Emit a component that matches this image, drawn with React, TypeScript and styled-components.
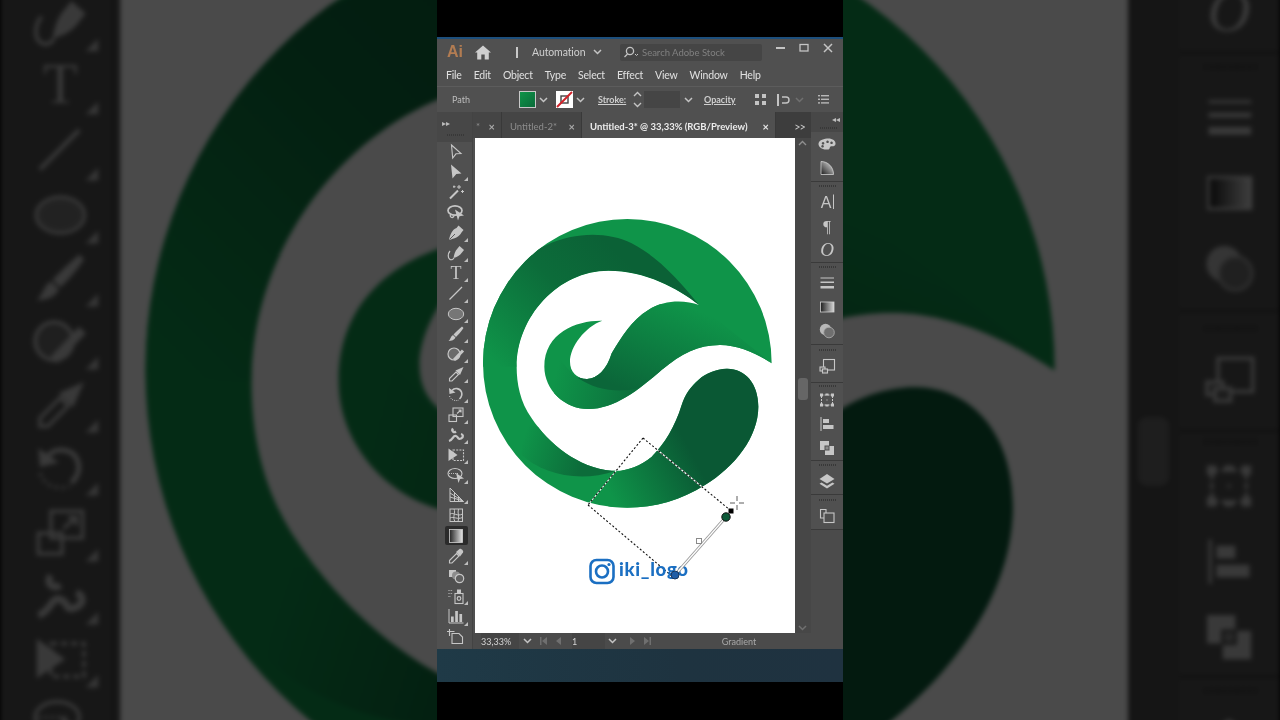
import React from "react"
import styled, { createGlobalStyle } from "styled-components"

const panel = "#505050"
const panelDark = "#3d3d3d"
const iconGrey = "#c6c6c6"

const GlobalStyle = createGlobalStyle`
  html, body { margin: 0; padding: 0; background: #000; }
  #root { width: 1280px; height: 720px; overflow: hidden; }
`

const Stage = styled.div`
  position: relative;
  width: 1280px;
  height: 720px;
  overflow: hidden;
  background: #000;
  display: flex;
  justify-content: center;
  font-family: Lato, "Liberation Sans", sans-serif;
`

// the video's blurred, zoomed copy of the same frame behind the portrait strip
const Backdrop = styled.div`
  position: absolute;
  inset: 0;
  display: flex;
  justify-content: center;
  transform: scale(3.15);
  transform-origin: 640px 360px;
  filter: blur(0.7px) brightness(0.29);
`

const Column = styled.div`
  position: relative;
  width: 406px;
  height: 720px;
  flex: none;
  background: #000;
  display: flex;
  flex-direction: column;
  padding-top: 37px;
  box-sizing: border-box;
  filter: blur(0.35px);
`

const BlueLine = styled.div`
  height: 2px;
  background: #1d4f7c;
`

const Window = styled.div`
  display: flex;
  flex-direction: column;
  height: 610px;
  background: ${panel};
  color: #d8d8d8;
`

const TealBar = styled.div`
  height: 33px;
  background: linear-gradient(90deg, #1f3a47, #1e3340 60%, #1f3240);
`

const TitleBar = styled.div`
  height: 26px;
  display: flex;
  align-items: center;
  padding-left: 10px;
`

const Cell = styled.div<{ $w: number; $left?: number; $center?: boolean }>`
  width: ${p => p.$w}px;
  margin-left: ${p => p.$left ?? 0}px;
  flex: none;
  display: flex;
  align-items: center;
  justify-content: ${p => (p.$center ? "center" : "flex-start")};
  white-space: nowrap;
`

const AiMark = styled.span`
  font-family: "Liberation Sans", sans-serif;
  font-size: 16px;
  font-weight: 700;
  color: #b27c52;
`

const Divider = styled.span`
  width: 2px;
  height: 11px;
  background: #c9c9c9;
`

const WorkspaceLabel = styled.span`
  font-size: 10.5px;
  letter-spacing: -0.1px;
  color: #cfcfcf;
`

const SearchBox = styled.div`
  width: 142px;
  height: 17px;
  margin-left: 16px;
  flex: none;
  background: #454545;
  border-radius: 2px;
  display: flex;
  align-items: center;
  gap: 2px;
  padding-left: 3px;
  box-sizing: border-box;
  font-size: 9.5px;
  color: #808080;
`

const WinControls = styled.div`
  display: flex;
  margin-left: 7px;
  align-self: flex-start;
  height: 17px;
`

const WinButton = styled.div`
  width: 23.5px;
  display: flex;
  align-items: center;
  justify-content: center;
  color: #c4c4c4;
`

const MenuBar = styled.div`
  height: 19px;
  display: flex;
  align-items: center;
  gap: 12px;
  padding-left: 9px;
  font-size: 10.5px;
  letter-spacing: -0.2px;
  color: #e0e0e0;
`

const ControlBar = styled.div`
  height: 26px;
  margin-top: 2px;
  display: flex;
  align-items: center;
  padding-left: 15px;
  border-top: 1px solid #5c5c5c;
  box-sizing: border-box;
  font-size: 9px;
  color: #bdbdbd;
`

const Underlined = styled.span`
  font-weight: 700;
  text-decoration: underline;
  color: #cfcfcf;
`

const FillSwatch = styled.div`
  width: 17px;
  height: 17px;
  box-sizing: border-box;
  border: 1px solid #c8c8c8;
  background: linear-gradient(135deg, #0f9449, #0a6b3a);
`

const StrokeSwatch = styled.div`
  width: 17px;
  height: 17px;
  background: #fff;
  display: flex;
`

const NumberField = styled.div`
  width: 36px;
  height: 17px;
  background: #454545;
`

const ChromeSpacer = styled.div<{ $h: number }>`
  height: ${p => p.$h}px;
  flex: none;
`

const Body = styled.div`
  flex: 1;
  min-height: 0;
  display: flex;
`

const ToolDock = styled.div`
  width: 36px;
  flex: none;
  display: flex;
  flex-direction: column;
  border-right: 1px solid #434343;
  box-sizing: border-box;
`

const DockHead = styled.div<{ $h: number; $end?: boolean }>`
  height: ${p => p.$h}px;
  flex: none;
  display: flex;
  flex-direction: column;
  justify-content: flex-end;
  align-items: ${p => (p.$end ? "flex-end" : "flex-start")};
  background: #474747;
  font-size: 8px;
  line-height: 10px;
  color: #bcbcbc;
  padding: 0 3px 0 5px;
  box-sizing: border-box;
`

const Grip = styled.div<{ $h?: number }>`
  height: ${p => p.$h ?? 8}px;
  flex: none;
  align-self: stretch;
  display: flex;
  align-items: center;
  justify-content: center;
  &::before {
    content: "";
    width: 17px;
    height: 2px;
    background: repeating-linear-gradient(90deg, #383838 0 1px, transparent 1px 2px);
  }
`

const ToolButton = styled.div<{ $active?: boolean; $more?: boolean }>`
  position: relative;
  height: 20.2px;
  margin-left: 2px;
  width: 34px;
  flex: none;
  display: flex;
  align-items: center;
  justify-content: center;
  color: ${iconGrey};
  &::before {
    content: "";
    display: ${p => (p.$active ? "block" : "none")};
    position: absolute;
    left: 6px;
    top: 0;
    width: 23px;
    height: 19px;
    background: #2b2b2b;
    border-radius: 2px;
  }
  &::after {
    content: "";
    display: ${p => (p.$more ? "block" : "none")};
    position: absolute;
    right: 5px;
    bottom: 1px;
    border-left: 4px solid transparent;
    border-bottom: 4px solid #bdbdbd;
  }
  svg { position: relative; }
`

const Center = styled.div`
  flex: 1;
  min-width: 0;
  display: flex;
  flex-direction: column;
`

const TabRow = styled.div`
  height: 26px;
  flex: none;
  display: flex;
  background: ${panelDark};
  font-size: 9.5px;
`

const Tab = styled.div<{ $w: number; $pad?: number; $active?: boolean }>`
  width: ${p => p.$w}px;
  flex: none;
  display: flex;
  align-items: center;
  justify-content: space-between;
  padding: 2px 6px 0 ${p => p.$pad ?? 8}px;
  box-sizing: border-box;
  background: ${p => (p.$active ? panel : "#454545")};
  color: ${p => (p.$active ? "#ececec" : "#8d8d8d")};
  font-weight: ${p => (p.$active ? 700 : 400)};
  border-right: 1px solid #393939;
`

const TabClose = styled.span<{ $active?: boolean }>`
  font-size: 11px;
  font-weight: 700;
  color: ${p => (p.$active ? "#e8e8e8" : "#a8a8a8")};
`

const TabOverflow = styled.div`
  flex: 1;
  display: flex;
  align-items: center;
  justify-content: flex-end;
  padding: 2px 6px 0 0;
  font-size: 11px;
  letter-spacing: -1px;
  color: #c8c8c8;
`

const CanvasRow = styled.div`
  height: 495px;
  flex: none;
  display: flex;
  padding-left: 2px;
`

const Canvas = styled.div`
  width: 320px;
  flex: none;
  background: #fff;
  svg { display: block; }
`

const ScrollTrack = styled.div`
  width: 16px;
  flex: none;
  display: flex;
  flex-direction: column;
  align-items: center;
  padding: 2px 4px 2px 3px;
  box-sizing: border-box;
  background: #474747;
  color: #8f8f8f;
`

const ScrollThumb = styled.div`
  width: 10px;
  height: 22px;
  margin-top: 232px;
  margin-bottom: auto;
  border-radius: 3px;
  background: #666;
`

const StatusBar = styled.div`
  height: 16px;
  flex: none;
  display: flex;
  align-items: center;
  font-size: 9px;
  color: #d4d4d4;
  padding-left: 8px;
  background: #4b4b4b;
`

const StatusField = styled(Cell)`
  height: 16px;
  background: #454545;
`

const GradientLabel = styled.span`
  color: #a9a9a9;
`

const RightDock = styled.div`
  width: 32px;
  flex: none;
  display: flex;
  flex-direction: column;
  background: #4b4b4b;
`

const DockGroup = styled.div<{ $h: number }>`
  height: ${p => p.$h}px;
  flex: none;
  box-sizing: border-box;
  display: flex;
  flex-direction: column;
  border-bottom: 1px solid #3a3a3a;
  background: ${panel};
`

const DockIcon = styled.div`
  height: 24px;
  flex: none;
  display: flex;
  align-items: center;
  justify-content: center;
  color: ${iconGrey};
`

const Chevron = ({ dim }: { dim?: boolean }) => (
  <svg width="9" height="6" viewBox="0 0 9 6" fill="none" stroke={dim ? "#707070" : "#c4c4c4"} strokeWidth="1.5">
    <path d="M1 1 L4.5 4.5 L8 1" />
  </svg>
)

const GlyphText = ({ children, size = 15, italic, serif, x = 10 }: { children: string; size?: number; italic?: boolean; serif?: boolean; x?: number }) => (
  <text
    x={x}
    y="15.5"
    textAnchor="middle"
    fontSize={size}
    fontStyle={italic ? "italic" : "normal"}
    fontFamily={serif ? '"Liberation Serif", serif' : '"Liberation Sans", sans-serif'}
    fill="currentColor"
  >
    {children}
  </text>
)

const S = { fill: "none", stroke: "currentColor" }

const toolIcons: Record<string, React.ReactNode> = {
  select: <path {...S} strokeWidth="1.1" d="M5.5 3 L15 11.5 L10 11.8 L6.7 16 Z" />,
  direct: <path fill="currentColor" d="M5 2.5 L15.5 11.5 L10.3 12 L6.5 16.5 Z" />,
  wand: (
    <g>
      <path {...S} strokeWidth="2" d="M4 16.5 L12 8.5" />
      <path {...S} strokeWidth="1" d="M13 3 V7 M11 5 H15 M16.5 8 V11 M15 9.5 H18 M8 3.5 V6 M7 4.7 H9.5" />
    </g>
  ),
  lasso: (
    <g>
      <ellipse {...S} strokeWidth="1.7" cx="9" cy="7.5" rx="7" ry="4.7" />
      <path {...S} strokeWidth="1.3" d="M5 11 C2.5 14 7 16 8 13" />
      <path fill="currentColor" d="M9 6.5 L18 12.5 L13.5 13.2 L12 17.5 Z" />
    </g>
  ),
  pen: (
    <g>
      <path fill="currentColor" d="M12.5 2.5 L17.5 7 L15.5 9.5 C13.5 14 8 15.5 3 17 C4 12 6 6.5 10.5 5 Z" />
      <path {...S} stroke="#505050" strokeWidth="0.9" d="M3.5 16.5 L9 11" />
    </g>
  ),
  curvature: (
    <g>
      <path fill="currentColor" d="M13.5 3 L18 7 L16 9.5 C14 12.5 11 14 7.5 15 C8 12 9 8 11.5 5.5 Z" />
      <path {...S} strokeWidth="1.2" d="M4 8 C1.5 11 2 15 3.5 16 C5 17.5 7 16.5 8 15" />
    </g>
  ),
  type: <GlyphText size={18} serif>T</GlyphText>,
  line: <path {...S} strokeWidth="1.3" d="M3.5 16.5 L16 4" />,
  ellipse: <ellipse fill="#767676" stroke="currentColor" strokeWidth="1" cx="10" cy="10" rx="7.7" ry="5.7" />,
  brush: (
    <path
      fill="currentColor"
      d="M16 2.5 L17.5 4 C15 8 12 11 10 13 L7.5 10.5 C10 8 13 5 16 2.5 Z M7 11 L9.5 13.5 C8.5 16 5.5 17 2.5 17 C4.5 15.5 4.5 12.5 7 11 Z"
    />
  ),
  shaper: (
    <g>
      <circle {...S} strokeWidth="1.2" cx="8" cy="10" r="6" fill="#6a6a6a" />
      <path {...S} strokeWidth="3" d="M8 16 L17 6.5" />
    </g>
  ),
  pencil: (
    <g>
      <path {...S} strokeWidth="1.1" d="M3.5 14.5 L10 8 L12.5 10.5 L6 17 L3.5 17 Z" />
      <path fill="currentColor" d="M9.5 6.5 L17.5 3 L14 11 Z" />
    </g>
  ),
  rotate: (
    <g>
      <path {...S} strokeWidth="1.6" d="M6 6.5 C8.5 3.5 14 4 15.5 8 C16.5 11 15 13.5 13.5 15" />
      <path fill="currentColor" d="M3 4 L3.5 10 L9.5 8.5 Z" />
      <path {...S} strokeWidth="1" strokeDasharray="1 1.2" d="M3.5 12 C5 16 9 17.5 13 16" />
    </g>
  ),
  scale: (
    <g {...S} strokeWidth="1.1">
      <rect x="7" y="3" width="10" height="8.5" />
      <rect x="3" y="10" width="7.5" height="6.5" />
      <path d="M11 8.5 L15 5 M12.5 5 H15 V7.5" />
    </g>
  ),
  warp: (
    <g {...S} strokeWidth="2.3">
      <path d="M3 16 C7 15 7 10 10 11 C13 12 11 15 15 13.5 C18 12 17 9.5 15 9" />
      <path d="M7 3.5 C5 6 8 8 10 6.5" />
    </g>
  ),
  freeTransform: (
    <g>
      <path fill="currentColor" d="M2.5 3.5 L11.5 10 L2.5 16 Z" />
      <rect {...S} strokeWidth="1.1" strokeDasharray="2 1.2" x="7" y="5" width="10.5" height="10.5" />
    </g>
  ),
  shapeBuilder: (
    <g>
      <ellipse {...S} strokeWidth="1.1" cx="9" cy="8.5" rx="7" ry="5" />
      <path {...S} strokeWidth="0.9" strokeDasharray="1 1" d="M3 8.5 H12" />
      <path fill="currentColor" d="M10 8 L18 13.5 L14 14 L12.5 18 Z" />
    </g>
  ),
  perspective: (
    <g {...S} strokeWidth="1">
      <path d="M4 3 V16.5 H17.5 Z" />
      <path d="M4 8 L17.5 16.5 M4 12 L17 16 M8.5 7.5 V16.5 M12.5 11.5 V16.5" />
    </g>
  ),
  mesh: (
    <g {...S} strokeWidth="1">
      <rect x="4" y="4" width="12.5" height="12.5" />
      <path d="M4 9 C8 7 11 12 16.5 9 M4 13 C8 11 11 15 16.5 12.5 M8 4 C10 8 6 12 9 16.5 M12.5 4 C11 8 14 12 12 16.5" />
    </g>
  ),
  gradient: (
    <g>
      <defs>
        <linearGradient id="toolGrad">
          <stop offset="0" stopColor="#222" />
          <stop offset="1" stopColor="#e4e4e4" />
        </linearGradient>
      </defs>
      <rect x="3.5" y="3.5" width="13" height="13" fill="url(#toolGrad)" stroke="#d0d0d0" strokeWidth="0.8" />
    </g>
  ),
  dropper: (
    <g>
      <path {...S} strokeWidth="1.1" d="M3.5 14.5 L10.5 7.5 L13 10 L6 17 L3.5 17 Z" />
      <path fill="currentColor" d="M10 6 L13.5 3 C15 2 18 5 17 6.5 L14 10.5 Z" />
    </g>
  ),
  blend: (
    <g>
      <rect fill="currentColor" x="3" y="4" width="7" height="7" />
      <circle fill="#8c8c8c" cx="10" cy="9.5" r="4" />
      <circle {...S} fill="#606060" strokeWidth="1.2" cx="13.5" cy="12.5" r="4.2" />
    </g>
  ),
  sprayer: (
    <g>
      <rect {...S} strokeWidth="1.1" x="9" y="7.5" width="8" height="10" />
      <rect fill="currentColor" x="11" y="3.5" width="4" height="3.5" />
      <circle {...S} strokeWidth="1.2" cx="13" cy="12.5" r="1.8" />
      <path {...S} strokeWidth="1" strokeDasharray="1 1.2" d="M2.5 4.5 H7 M2.5 7.5 H7 M2.5 10.5 H5" />
    </g>
  ),
  graph: (
    <g>
      <path {...S} strokeWidth="1" d="M3 3 V17 H17.5" />
      <rect fill="currentColor" x="5" y="10.5" width="2.7" height="5.5" />
      <rect fill="currentColor" x="9.2" y="5" width="2.7" height="11" />
      <rect fill="currentColor" x="13.4" y="8" width="2.7" height="8" />
    </g>
  ),
  artboard: (
    <g {...S} strokeWidth="1.1">
      <path d="M6 6.5 H13 L16.5 10 V16.5 H6 Z" />
      <path d="M3.5 2 V9 M1 4.5 H8.5" />
    </g>
  ),
}

const tools: { name: string; more?: boolean; active?: boolean }[] = [
  { name: "select" },
  { name: "direct", more: true },
  { name: "wand" },
  { name: "lasso" },
  { name: "pen", more: true },
  { name: "curvature", more: true },
  { name: "type", more: true },
  { name: "line", more: true },
  { name: "ellipse", more: true },
  { name: "brush", more: true },
  { name: "shaper", more: true },
  { name: "pencil", more: true },
  { name: "rotate", more: true },
  { name: "scale", more: true },
  { name: "warp", more: true },
  { name: "freeTransform", more: true },
  { name: "shapeBuilder", more: true },
  { name: "perspective", more: true },
  { name: "mesh" },
  { name: "gradient", active: true },
  { name: "dropper", more: true },
  { name: "blend" },
  { name: "sprayer", more: true },
  { name: "graph", more: true },
  { name: "artboard" },
]

const dockIcons: Record<string, React.ReactNode> = {
  palette: (
    <path
      fill="currentColor"
      fillRule="evenodd"
      d="M10 4.5 C15 4 19 6.5 18.5 10 C18 13 15 12 13.5 12.5 C12 13.5 13.5 15.5 10.5 15.5 C5 16 1.5 13 1.5 10 C1.5 7 5 5 10 4.5 Z M6 8 a1.3 1.3 0 1 0 .1 0 Z M10.5 6.5 a1.3 1.3 0 1 0 .1 0 Z M14.5 7.5 a1.3 1.3 0 1 0 .1 0 Z M5.5 11 a1.3 1.3 0 1 0 .1 0 Z"
    />
  ),
  swatch: (
    <g>
      <defs>
        <linearGradient id="dockSwatch" x1="0" y1="1" x2="1" y2="0">
          <stop offset="0" stopColor="#1c1c1c" />
          <stop offset="1" stopColor="#e8e8e8" />
        </linearGradient>
      </defs>
      <path fill="url(#dockSwatch)" stroke="#d0d0d0" strokeWidth="0.8" d="M4 3.5 C11 3.5 16.5 9 16.5 16.5 H4 Z" />
    </g>
  ),
  charA: (
    <g>
      <GlyphText size={16} x={9}>A</GlyphText>
      <path d="M16.5 2.5 V17" stroke="currentColor" strokeWidth="1" />
    </g>
  ),
  para: (
    <g>
      <GlyphText size={17} serif>¶</GlyphText>
    </g>
  ),
  opentype: <GlyphText size={19} italic serif>O</GlyphText>,
  stroke: <path fill="currentColor" d="M3.5 4.5 H17 V5.5 H3.5 Z M3.5 8.5 H17 V10 H3.5 Z M3.5 13 H17 V15.5 H3.5 Z" />,
  gradient: (
    <g>
      <defs>
        <linearGradient id="dockGrad">
          <stop offset="0" stopColor="#1c1c1c" />
          <stop offset="1" stopColor="#d8d8d8" />
        </linearGradient>
      </defs>
      <rect x="3.5" y="5" width="13.5" height="10" fill="url(#dockGrad)" stroke="#d0d0d0" strokeWidth="0.8" />
    </g>
  ),
  transparency: (
    <g>
      <circle fill="#b8b8b8" cx="8.5" cy="8.5" r="5.7" />
      <circle fill="#6f6f6f" stroke="#a8a8a8" strokeWidth="0.9" cx="12" cy="11.5" r="5.3" />
    </g>
  ),
  appearance: (
    <g {...S} strokeWidth="1.1">
      <rect x="6.5" y="3.5" width="11" height="10.5" />
      <rect x="3" y="11" width="5" height="4" fill="#606060" />
      <rect x="5.5" y="13" width="5" height="4" fill="#606060" />
    </g>
  ),
  transform: (
    <g>
      <rect {...S} strokeWidth="1" strokeDasharray="2 1" x="4.5" y="5" width="11" height="10" />
      <path
        fill="currentColor"
        d="M3 3.5 H6 V6.5 H3 Z M14 3.5 H17 V6.5 H14 Z M3 13.5 H6 V16.5 H3 Z M14 13.5 H17 V16.5 H14 Z M8.5 3.5 H11.5 V5.5 H8.5 Z M8.5 14.5 H11.5 V16.5 H8.5 Z M9.5 9.5 H10.5 V10.5 H9.5 Z"
      />
    </g>
  ),
  align: <path fill="currentColor" d="M3.5 3 H4.5 V17 H3.5 Z M6 5 H12 V9 H6 Z M6 11 H16.5 V15 H6 Z" />,
  pathfinder: (
    <g>
      <rect fill="currentColor" x="3" y="3" width="9" height="9" />
      <rect fill="currentColor" x="8" y="8" width="9" height="9" />
      <rect fill="#8a8a8a" stroke="#505050" x="8" y="8" width="4" height="4" />
    </g>
  ),
  layers: (
    <g fill="currentColor">
      <path d="M10 3 L17.5 8 L10 12.5 L2.5 8 Z" />
      <path d="M4.5 11.5 L10 14.8 L15.5 11.5 L17.5 12.8 L10 17.5 L2.5 12.8 Z" />
    </g>
  ),
  artboards: (
    <g {...S} strokeWidth="1.1">
      <path d="M9 7 V3.5 H3.5 V12 H7" />
      <rect x="7" y="7" width="10" height="9.5" />
    </g>
  ),
}

const dockGroups: { h: number; grip?: number; rows: string[]; first?: boolean }[] = [
  { h: 50, rows: ["palette", "swatch"], first: true },
  { h: 81, rows: ["charA", "para", "opentype"] },
  { h: 82, rows: ["stroke", "gradient", "transparency"] },
  { h: 38, grip: 9, rows: ["appearance"] },
  { h: 78, grip: 5, rows: ["transform", "align", "pathfinder"] },
  { h: 34, grip: 8, rows: ["layers"] },
  { h: 35, grip: 9, rows: ["artboards"] },
]

// gradient artwork, in a 930 unit box that sits at 475,210 on the screen at 1/3 scale
const logoPath =
  "M890 460 A433 433 0 1 0 457 893 C540 893 620 870 690 825 C780 770 850 680 850 590 C850 520 810 475 755 476 C690 478 640 525 620 585 C600 650 570 700 530 740 C495 770 450 785 410 782 C310 775 220 700 170 625 C135 575 125 520 125 470 C125 320 250 182 400 182 C510 182 610 235 672 285 C630 270 570 268 520 300 C470 330 440 380 410 430 C395 480 365 508 335 507 C305 506 285 485 285 455 C285 410 330 350 382 332 C310 330 208 365 208 470 C208 540 270 597 340 597 C420 597 490 540 560 480 C620 430 670 405 735 405 C790 405 845 430 890 460 Z"

const Artwork = ({ annotated }: { annotated: boolean }) => (
  <svg width="320" height="495" viewBox="475 138 320 495">
    <defs>
      <clipPath id="logoClip">
        <path d={logoPath} />
      </clipPath>
      <linearGradient id="topShade" gradientUnits="userSpaceOnUse" x1="420" y1="120" x2="70" y2="470">
        <stop offset="0" stopColor="#0b6136" />
        <stop offset="0.4" stopColor="#0c6c3a" />
        <stop offset="1" stopColor="#0f9449" />
      </linearGradient>
      <linearGradient id="lowShade" gradientUnits="userSpaceOnUse" x1="140" y1="700" x2="320" y2="760">
        <stop offset="0" stopColor="#0f9449" />
        <stop offset="1" stopColor="#0c6c3a" />
      </linearGradient>
      <linearGradient id="blobShade" gradientUnits="userSpaceOnUse" x1="410" y1="860" x2="650" y2="730">
        <stop offset="0" stopColor="#0f9449" />
        <stop offset="1" stopColor="#0a5834" />
      </linearGradient>
      <linearGradient id="leafShade" gradientUnits="userSpaceOnUse" x1="620" y1="280" x2="500" y2="560">
        <stop offset="0" stopColor="#0f9449" />
        <stop offset="1" stopColor="#0b6639" />
      </linearGradient>
      <linearGradient id="lobeShade" gradientUnits="userSpaceOnUse" x1="240" y1="500" x2="480" y2="560">
        <stop offset="0" stopColor="#0f9449" />
        <stop offset="1" stopColor="#0c6f3c" />
      </linearGradient>
    </defs>
    <g transform="translate(475 210) scale(0.33333)">
      <path d={logoPath} fill="#0f9449" />
      <g clipPath="url(#logoClip)">
        <path fill="url(#topShade)" d="M215 105 C300 65 400 65 470 100 C550 140 620 220 672 285 C610 235 510 182 400 182 C250 182 125 320 125 470 L0 470 L0 200 Z" />
        <path fill="url(#lowShade)" d="M140 735 C200 790 310 820 420 783 L420 700 L140 640 Z" />
        <path fill="url(#lobeShade)" d="M230 420 L300 500 L560 480 L480 620 L240 620 Z" />
        <path fill="url(#leafShade)" d="M672 285 L500 280 L400 430 L310 505 C360 540 430 550 490 535 L560 480 L735 405 L890 460 Z" />
        <path fill="url(#blobShade)" d="M400 800 L530 740 L620 560 L720 460 L890 460 L890 900 L400 900 Z" />
      </g>
    </g>

    {annotated && (
      <g>
        <g fill="none" strokeWidth="1.1">
          <path stroke="#fff" d="M643 438 L730 510 M643 438 L588 505 M588 505 L673 577" />
          <path stroke="#111" strokeDasharray="2 2" d="M643 438 L730 510 M643 438 L588 505 M588 505 L673 577" />
        </g>

        <g fill="none" stroke="#1b6fc2">
          <rect x="590.5" y="560" width="23" height="23" rx="6" strokeWidth="2.6" />
          <circle cx="602" cy="571.5" r="6" strokeWidth="2.6" />
        </g>
        <circle cx="609" cy="564.5" r="1.6" fill="#1b6fc2" />
        <text x="619" y="576" fontFamily="Lato, sans-serif" fontWeight="900" fontSize="18.5" fill="#1b6fc2" letterSpacing="0.7">
          iki_logo
        </text>

        <path d="M675 575 L726 517" stroke="#9a9a9a" strokeWidth="3" />
        <path d="M675 575 L726 517" stroke="#fff" strokeWidth="1.2" />
        <rect x="696.5" y="538.5" width="5" height="5" fill="#fff" stroke="#8a8a8a" />
        <rect x="728.5" y="508.5" width="5" height="5" fill="#000" />
        <circle cx="726" cy="517" r="4.2" fill="#0d5a38" stroke="#111" strokeWidth="1" />
        <path d="M737 496 V501 M737 505 V510 M730 503 H735 M739 503 H744" stroke="#333" strokeWidth="0.8" />
        <circle cx="675" cy="575" r="4" fill="#1f5da6" stroke="#16365e" strokeWidth="1" />
      </g>
    )}
  </svg>
)

const TopChrome = () => (
  <>
    <TitleBar>
      <Cell $w={26}><AiMark>Ai</AiMark></Cell>
      <Cell $w={20} $center>
        <svg width="16" height="15" viewBox="0 0 16 15" fill="#cfcfcf">
          <path d="M8 0.5 L16 7.5 H13.8 V14.5 H9.7 V9.5 H6.3 V14.5 H2.2 V7.5 H0 Z" />
        </svg>
      </Cell>
      <Cell $w={20} $left={14} $center><Divider /></Cell>
      <Cell $w={58} $left={5}><WorkspaceLabel>Automation</WorkspaceLabel></Cell>
      <Cell $w={14} $center><Chevron /></Cell>
      <SearchBox>
        <svg width="17" height="12" viewBox="0 0 17 12" fill="none" stroke="#c4c4c4" strokeWidth="1.3">
          <circle cx="7" cy="5" r="3.6" />
          <path d="M4.5 8 L1.5 11" />
          <path d="M12 8 L13.5 9.5 L15 8" strokeWidth="1" />
        </svg>
        Search Adobe Stock
      </SearchBox>
      <WinControls>
        <WinButton>
          <svg width="9" height="3"><rect width="9" height="2" y="1" fill="currentColor" /></svg>
        </WinButton>
        <WinButton>
          <svg width="10" height="9" fill="none" stroke="currentColor" strokeWidth="1.3"><rect x="1" y="1.5" width="8" height="6.5" /></svg>
        </WinButton>
        <WinButton>
          <svg width="10" height="10" stroke="currentColor" strokeWidth="1.5"><path d="M1 1 L9 9 M9 1 L1 9" /></svg>
        </WinButton>
      </WinControls>
    </TitleBar>
    <MenuBar>
      {["File", "Edit", "Object", "Type", "Select", "Effect", "View", "Window", "Help"].map(item => (
        <span key={item}>{item}</span>
      ))}
    </MenuBar>
    <ControlBar>
      <Cell $w={67}>Path</Cell>
      <FillSwatch />
      <Cell $w={14} $center><Chevron /></Cell>
      <Cell $w={17} $left={6}>
        <StrokeSwatch>
          <svg width="17" height="17" fill="none">
            <rect x="5" y="5" width="7" height="7" stroke="#444" strokeWidth="1.4" />
            <path d="M1 16 L16 1" stroke="#d2232a" strokeWidth="2" />
          </svg>
        </StrokeSwatch>
      </Cell>
      <Cell $w={14} $center><Chevron /></Cell>
      <Cell $w={32} $left={11}><Underlined>Stroke:</Underlined></Cell>
      <Cell $w={14} $center>
        <svg width="9" height="17" viewBox="0 0 9 17" fill="none" stroke="#c4c4c4" strokeWidth="1.4">
          <path d="M1 5 L4.5 1.5 L8 5 M1 12 L4.5 15.5 L8 12" />
        </svg>
      </Cell>
      <NumberField />
      <Cell $w={16} $center><Chevron /></Cell>
      <Cell $w={40} $left={8}><Underlined>Opacity</Underlined></Cell>
      <Cell $w={16} $left={8} $center>
        <svg width="11" height="11" fill="#c4c4c4">
          <rect width="4" height="4" /><rect x="7" width="4" height="4" /><rect y="7" width="4" height="4" /><rect x="7" y="7" width="4" height="4" />
        </svg>
      </Cell>
      <Cell $w={16} $left={7} $center>
        <svg width="13" height="12" fill="none" stroke="#c4c4c4" strokeWidth="1.4">
          <path d="M1 0 V12" strokeWidth="2" />
          <path d="M5 3 H9 A3 3 0 0 1 9 9 H5" />
        </svg>
      </Cell>
      <Cell $w={14} $left={1} $center><Chevron dim /></Cell>
      <Cell $w={16} $left={9} $center>
        <svg width="11" height="9" fill="#b8b8b8">
          <rect width="2" height="1.4" /><rect x="3" width="8" height="1.4" />
          <rect y="3.6" width="2" height="1.4" /><rect x="3" y="3.6" width="8" height="1.4" />
          <rect y="7.2" width="2" height="1.4" /><rect x="3" y="7.2" width="8" height="1.4" />
        </svg>
      </Cell>
    </ControlBar>
  </>
)

const Tabs = () => (
  <TabRow>
    <Tab $w={29} $pad={3}>
      <span>*</span>
      <TabClose>×</TabClose>
    </Tab>
    <Tab $w={80}>
      <span>Untitled-2*</span>
      <TabClose>×</TabClose>
    </Tab>
    <Tab $w={194} $active>
      <span>Untitled-3* @ 33,33% (RGB/Preview)</span>
      <TabClose $active>×</TabClose>
    </Tab>
    <TabOverflow>&gt;&gt;</TabOverflow>
  </TabRow>
)

const Status = () => (
  <StatusBar>
    <StatusField $w={38}>33,33%</StatusField>
    <Cell $w={14} $left={1} $center><Chevron /></Cell>
    <Cell $w={36} $left={2} $center>
      <svg width="30" height="8" fill="#6f6f6f">
        <rect x="1" width="1.5" height="8" /><path d="M8 0 V8 L3 4 Z M22 0 V8 L17 4 Z" />
      </svg>
    </Cell>
    <StatusField $w={33}>1</StatusField>
    <Cell $w={14} $center><Chevron /></Cell>
    <Cell $w={36} $center>
      <svg width="30" height="8" fill="#6f6f6f">
        <path d="M8 0 V8 L13 4 Z M22 0 V8 L27 4 Z" /><rect x="27.5" width="1.5" height="8" />
      </svg>
    </Cell>
    <Cell $w={140} $left={14} $center><GradientLabel>Gradient</GradientLabel></Cell>
  </StatusBar>
)

// the backdrop copy only shows docks and artwork, the rest falls outside the picture
const Screen = ({ backdrop = false }: { backdrop?: boolean }) => (
  <Column>
    <BlueLine />
    <Window>
      {backdrop ? <ChromeSpacer $h={73} /> : <TopChrome />}
      <Body>
        <ToolDock>
          <DockHead $h={30}>
            {!backdrop && "▸▸"}
            <Grip $h={14} />
          </DockHead>
          {tools.map(tool => (
            <ToolButton key={tool.name} $active={tool.active} $more={tool.more}>
              <svg width="20" height="20" viewBox="0 0 20 20">{toolIcons[tool.name]}</svg>
            </ToolButton>
          ))}
        </ToolDock>
        <Center>
          {backdrop ? <ChromeSpacer $h={26} /> : <Tabs />}
          <CanvasRow>
            <Canvas><Artwork annotated={!backdrop} /></Canvas>
            <ScrollTrack>
              <svg width="9" height="6" viewBox="0 0 9 6" fill="none" stroke="currentColor" strokeWidth="1.4"><path d="M1 5 L4.5 1.5 L8 5" /></svg>
              <ScrollThumb />
              <Chevron dim />
            </ScrollTrack>
          </CanvasRow>
          {!backdrop && <Status />}
        </Center>
        <RightDock>
          <DockHead $h={20} $end>
            {!backdrop && "◂◂"}
            <Grip $h={8} />
          </DockHead>
          {dockGroups.map(group => (
            <DockGroup key={group.rows[0]} $h={group.h}>
              {!group.first && <Grip $h={group.grip} />}
              {group.rows.map(row => (
                <DockIcon key={row}>
                  <svg width="20" height="20" viewBox="0 0 20 20">{dockIcons[row]}</svg>
                </DockIcon>
              ))}
            </DockGroup>
          ))}
        </RightDock>
      </Body>
    </Window>
    <TealBar />
  </Column>
)

export default function App() {
  return (
    <Stage>
      <GlobalStyle />
      <Backdrop aria-hidden="true">
        <Screen backdrop />
      </Backdrop>
      <Screen />
    </Stage>
  )
}
